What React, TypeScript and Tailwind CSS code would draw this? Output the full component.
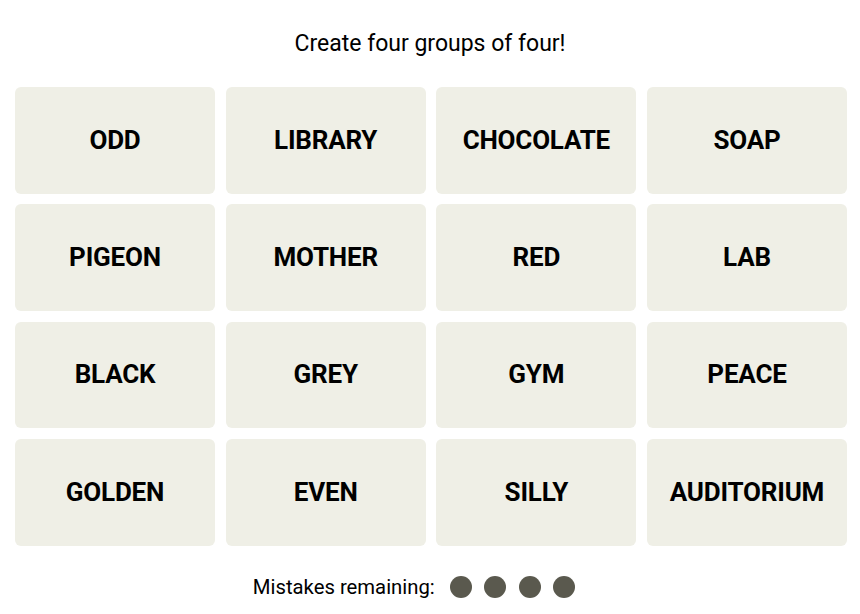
import React from "react";

const words = [
  "ODD", "LIBRARY", "CHOCOLATE", "SOAP",
  "PIGEON", "MOTHER", "RED", "LAB",
  "BLACK", "GREY", "GYM", "PEACE",
  "GOLDEN", "EVEN", "SILLY", "AUDITORIUM",
];

export default function App() {
  return (
    <div className="w-[860px] h-[614px] bg-white flex flex-col items-center" style={{ fontFamily: "Roboto, 'Liberation Sans', sans-serif" }}>
      <div className="mt-[28px] h-[30px] flex items-center text-[23px] text-black leading-none">Create four groups of four!</div>
      <div className="mt-[29px] grid grid-cols-4 gap-[10.67px] w-[832px] ml-[2px]">
        {words.map((w) => (
          <div key={w} className="h-[106.67px] rounded-[6px] bg-[#efefe6] flex items-center justify-center text-[26px] font-bold text-black tracking-[-0.2px]">
            {w}
          </div>
        ))}
      </div>
      <div className="mt-[26px] mr-[32px] flex items-center text-[20.3px] text-black">
        <span>Mistakes remaining:</span>
        <div className="flex ml-[15px] gap-[12.5px]">
          <span className="w-[22px] h-[22px] rounded-full bg-[#5a594e]" />
          <span className="w-[22px] h-[22px] rounded-full bg-[#5a594e]" />
          <span className="w-[22px] h-[22px] rounded-full bg-[#5a594e]" />
          <span className="w-[22px] h-[22px] rounded-full bg-[#5a594e]" />
        </div>
      </div>
    </div>
  );
}
